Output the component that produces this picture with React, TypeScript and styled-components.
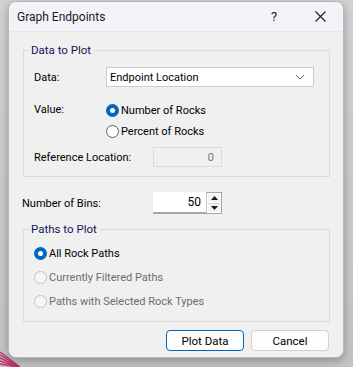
import * as React from 'react';
import styled, { createGlobalStyle, css } from 'styled-components';

const GlobalStyle = createGlobalStyle`
  html, body {
    margin: 0;
    padding: 0;
    background: #cccccc;
  }
  body {
    font-family: Roboto, "Noto Sans", sans-serif;
    font-size: 11px;
    color: #000;
  }
`;

const Desktop = styled.div`
  position: relative;
  width: 353px;
  height: 367px;
  overflow: hidden;
  background: linear-gradient(#d2d2d2, #c4c4c4);
`;

const Stripes = styled.svg`
  position: absolute;
  left: 0;
  bottom: 0;
`;

const Window = styled.div`
  position: relative;
  margin: 1px 0 0 8px;
  width: 336px;
  height: 357px;
  box-sizing: border-box;
  border: 1px solid #b8b8b8;
  border-radius: 8px;
  background: #f0f0f0;
  box-shadow: 0 3px 10px rgba(0, 0, 0, 0.28);
  overflow: hidden;
  display: flex;
  flex-direction: column;
`;

const TitleBar = styled.div`
  height: 29px;
  flex: none;
  display: flex;
  align-items: center;
  padding-left: 8px;
  background: #f4f2f8;
  border-bottom: 1px solid #e8e6ec;
`;

const Title = styled.span`
  flex: 1;
  font-size: 12px;
  color: #1a1a1a;
`;

const TitleButton = styled.span`
  width: 46px;
  display: flex;
  justify-content: center;
  align-items: center;
  font-size: 13px;
  color: #1a1a1a;
`;

const Body = styled.div`
  display: flex;
  flex-direction: column;
  padding: 0 12px 0 13px;
`;

const Group = styled.fieldset<{ $top: number; $pad: string }>`
  margin: ${p => p.$top}px 1px 0 1px;
  padding: ${p => p.$pad};
  border: 1px solid #dcdcdc;
  min-width: 0;
  display: flex;
  flex-direction: column;
`;

const Legend = styled.legend`
  padding: 0 2px;
  margin-left: -5px;
  line-height: 16px;
  font-size: 11.5px;
  color: #14145c;
`;

const Row = styled.div<{ $mt?: number; $h?: number }>`
  display: flex;
  align-items: center;
  height: ${p => p.$h || 20}px;
  margin-top: ${p => p.$mt || 0}px;
`;

const Label = styled.span<{ $w: number }>`
  width: ${p => p.$w}px;
  flex: none;
`;

const TopLabel = styled(Label)`
  align-self: flex-start;
  line-height: 20px;
`;

const Combo = styled.div`
  width: 209px;
  height: 20px;
  box-sizing: border-box;
  border: 1px solid #cccccc;
  background: #fff;
  display: flex;
  align-items: center;
  justify-content: space-between;
  padding: 0 8px 0 3px;
`;

const RadioCol = styled.div<{ $gap: number }>`
  display: flex;
  flex-direction: column;
  gap: ${p => p.$gap}px;
`;

const RadioRow = styled.label<{ $disabled?: boolean }>`
  display: flex;
  align-items: center;
  gap: 2px;
  height: 20px;
  color: ${p => (p.$disabled ? '#6d6d6d' : '#000')};
`;

const RadioDot = styled.span<{ $checked?: boolean; $disabled?: boolean }>`
  width: 13px;
  height: 13px;
  box-sizing: border-box;
  border-radius: 50%;
  flex: none;
  ${p =>
    p.$checked
      ? css`
          background: #0067c0;
          display: flex;
          align-items: center;
          justify-content: center;
          &::after {
            content: '';
            width: 5px;
            height: 5px;
            border-radius: 50%;
            background: #fff;
          }
        `
      : css`
          background: ${p.$disabled ? '#f5f5f5' : '#fdfdfd'};
          border: 1px solid ${p.$disabled ? '#c2c2c2' : '#5f5f5f'};
        `}
`;

const Field = styled.div<{ $disabled?: boolean }>`
  width: 69px;
  height: 20px;
  box-sizing: border-box;
  border: 1px solid #dadada;
  background: ${p => (p.$disabled ? '#f0f0f0' : '#fff')};
  color: #7a7a7a;
  display: flex;
  align-items: center;
  justify-content: flex-end;
  padding-right: 7px;
  font-size: 11.5px;
`;

const Spin = styled.div`
  width: 69px;
  height: 22px;
  display: flex;
`;

const SpinEdit = styled.div`
  flex: 1;
  background: #fff;
  border-bottom: 2px solid #a5a5a5;
  display: flex;
  align-items: center;
  justify-content: flex-end;
  padding-right: 5px;
  font-size: 12px;
`;

const SpinButtons = styled.div`
  width: 16px;
  box-sizing: border-box;
  border: 1px solid #a5a5a5;
  border-left: 1px solid #c8c8c8;
  display: flex;
  flex-direction: column;
  background: #f3f3f3;
`;

const SpinButton = styled.div<{ $down?: boolean }>`
  flex: 1;
  display: flex;
  align-items: center;
  justify-content: center;
  border: 1px solid #fff;
  ${p => p.$down && css`border-top: 1px solid #d4d4d4;`}
`;

const ButtonBar = styled.div`
  display: flex;
  justify-content: flex-end;
  gap: 7px;
  margin: 8px 2px 0 0;
`;

const Button = styled.div<{ $primary?: boolean }>`
  width: 78px;
  height: 21px;
  box-sizing: border-box;
  border-radius: 4px;
  background: #fdfdfd;
  border: 1px solid ${p => (p.$primary ? '#0067c0' : '#d0d0d0')};
  display: flex;
  align-items: center;
  justify-content: center;
  font-size: 11.5px;
`;

const Chevron = () => (
  <svg width="10" height="6" viewBox="0 0 10 6">
    <path d="M1 1 L5 5 L9 1" fill="none" stroke="#6a6a6a" strokeWidth="1" />
  </svg>
);

const Arrow = ({ down }: { down?: boolean }) => (
  <svg width="7" height="4" viewBox="0 0 7 4">
    <path d={down ? 'M0 0 H7 L3.5 4 Z' : 'M0 4 H7 L3.5 0 Z'} fill="#1a1a1a" />
  </svg>
);

export default function App() {
  return (
    <>
      <GlobalStyle />
      <Desktop>
        <Stripes width="24" height="18" viewBox="0 0 24 18">
          {[0, 3, 6, 9, 12].map(o => (
            <path key={o} d={`M0 ${3 + o} L${20 - o * 0.3} 18`} stroke="#c0306a" strokeWidth="1.4" />
          ))}
        </Stripes>
        <Window>
          <TitleBar>
            <Title>Graph Endpoints</Title>
            <TitleButton>?</TitleButton>
            <TitleButton>
              <svg width="11" height="11" viewBox="0 0 11 11">
                <path d="M0.5 0.5 L10.5 10.5 M10.5 0.5 L0.5 10.5" stroke="#1a1a1a" strokeWidth="1.1" />
              </svg>
            </TitleButton>
          </TitleBar>
          <Body>
            <Group $top={10} $pad="9px 15px 9px 10px">
              <Legend>Data to Plot</Legend>
              <Row>
                <Label $w={72}>Data:</Label>
                <Combo>
                  <span>Endpoint Location</span>
                  <Chevron />
                </Combo>
              </Row>
              <Row $mt={13} $h={41}>
                <TopLabel $w={72}>Value:</TopLabel>
                <RadioCol $gap={1}>
                  <RadioRow>
                    <RadioDot $checked />
                    Number of Rocks
                  </RadioRow>
                  <RadioRow>
                    <RadioDot />
                    Percent of Rocks
                  </RadioRow>
                </RadioCol>
              </Row>
              <Row $mt={6}>
                <Label $w={119}>Reference Location:</Label>
                <Field $disabled>0</Field>
              </Row>
            </Group>
            <Row $mt={15} $h={22}>
              <Label $w={131}>Number of Bins:</Label>
              <Spin>
                <SpinEdit>50</SpinEdit>
                <SpinButtons>
                  <SpinButton><Arrow /></SpinButton>
                  <SpinButton $down><Arrow down /></SpinButton>
                </SpinButtons>
              </Spin>
            </Row>
            <Group $top={7} $pad="6px 10px 10px 10px">
              <Legend>Paths to Plot</Legend>
              <RadioCol $gap={4}>
                <RadioRow>
                  <RadioDot $checked />
                  All Rock Paths
                </RadioRow>
                <RadioRow $disabled>
                  <RadioDot $disabled />
                  Currently Filtered Paths
                </RadioRow>
                <RadioRow $disabled>
                  <RadioDot $disabled />
                  Paths with Selected Rock Types
                </RadioRow>
              </RadioCol>
            </Group>
            <ButtonBar>
              <Button $primary>Plot Data</Button>
              <Button>Cancel</Button>
            </ButtonBar>
          </Body>
        </Window>
      </Desktop>
    </>
  );
}
